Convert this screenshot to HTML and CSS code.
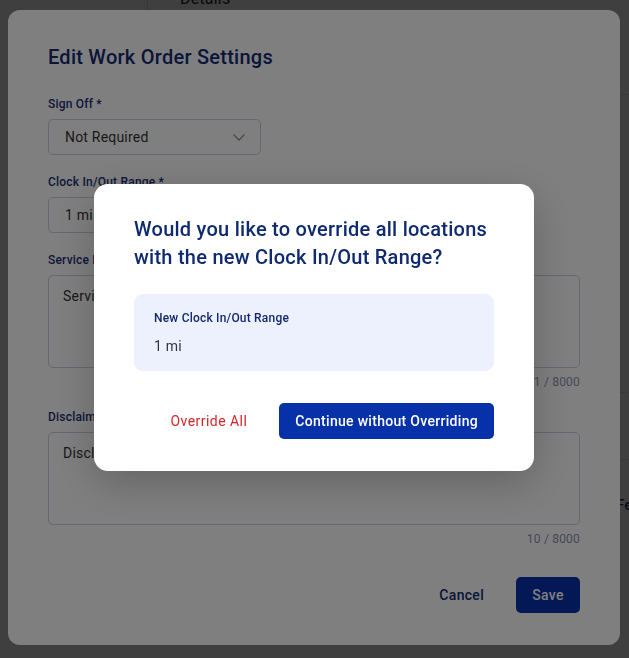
FILE: index.html
```html
<!DOCTYPE html>
<html lang="en">
<head>
    <meta charset="UTF-8">
    <meta name="viewport" content="width=device-width, initial-scale=1.0">
    <title>Edit Work Order Settings</title>
    <link rel="stylesheet" href="styles.css">
</head>
<body>
<!-- page behind the modals -->
<div class="page">
    <aside class="sidebar"><div class="sidebar-head"></div></aside>
    <main class="main">
        <div class="tabs"><span class="tab">Details</span></div>
        <div class="row row-top"></div>
        <div class="row row-mid"></div>
        <div class="row row-low"></div>
        <div class="summary">
            <span></span>
            <span class="summary-label">Fees</span>
        </div>
    </main>
</div>

<!-- settings modal -->
<div class="overlay overlay-modal">
    <div class="modal">
        <h2 class="modal-title">Edit Work Order Settings</h2>

        <div class="field">
            <label class="field-label">Sign Off *</label>
            <div class="select">
                <span>Not Required</span>
                <svg class="chevron" width="12" height="7" viewBox="0 0 12 7" fill="none">
                    <path d="M1 1l5 5 5-5" stroke="#8a8f9c" stroke-width="1.3" stroke-linecap="round" stroke-linejoin="round"/>
                </svg>
            </div>
        </div>

        <div class="field">
            <label class="field-label">Clock In/Out Range *</label>
            <div class="select"><span>1 mi</span></div>
        </div>

        <div class="field">
            <label class="field-label">Service Instructions</label>
            <div class="textarea">Service instructions</div>
            <div class="counter">21 / 8000</div>
        </div>

        <div class="field">
            <label class="field-label">Disclaimer</label>
            <div class="textarea">Disclaimer</div>
            <div class="counter">10 / 8000</div>
        </div>

        <div class="modal-actions">
            <button class="btn btn-text">Cancel</button>
            <button class="btn btn-primary">Save</button>
        </div>
    </div>
</div>

<!-- confirm dialog -->
<div class="overlay">
    <div class="dialog">
        <h2 class="dialog-title">Would you like to override all locations with the new Clock In/Out Range?</h2>
        <div class="info-box">
            <div class="info-label">New Clock In/Out Range</div>
            <div class="info-value">1 mi</div>
        </div>
        <div class="dialog-actions">
            <button class="btn btn-danger">Override All</button>
            <button class="btn btn-primary">Continue without Overriding</button>
        </div>
    </div>
</div>
</body>
</html>
```

FILE: styles.css
```css
* {
    box-sizing: border-box;
}

body {
    margin: 0;
    background: #ffffff;
    font-family: Roboto, "Noto Sans", sans-serif;
    letter-spacing: 0.2px;
    color: #333333;
    overflow: hidden;
}

/* page behind */
.page {
    display: flex;
    height: 100vh;
}

.sidebar {
    flex-shrink: 0;
    width: 148px;
}

.sidebar-head {
    height: 60px;
    border-right: 1px solid #d8dbe3;
}

.main {
    flex: 1;
    min-width: 0;
}

.tabs {
    margin-top: -12px;
    padding-left: 32px;
    height: 26px;
}

.tab {
    font-size: 16px;
    line-height: 22px;
    color: #1a1a2e;
}

.row {
    border-bottom: 1px solid #e3e5ec;
}

.row-top {
    height: 81px;
}

.row-mid {
    height: 298px;
}

.row-low {
    height: 67px;
}

.summary {
    display: grid;
    grid-template-columns: 468px 1fr;
    padding-top: 36px;
}

.summary-label {
    font-size: 15px;
    font-weight: 500;
    color: #142b72;
}

/* overlays */
.overlay {
    position: fixed;
    inset: 0;
    background: rgba(0, 0, 0, 0.5);
    display: flex;
    justify-content: center;
    align-items: center;
}

.overlay-modal {
    justify-content: flex-start;
    align-items: flex-start;
    padding: 10px 8px;
}

.modal {
    width: 612px;
    height: 635px;
    background: #ffffff;
    border-radius: 12px;
    padding: 33px 40px 32px;
    display: flex;
    flex-direction: column;
}

.modal-title {
    margin: 0 0 25px;
    font-size: 20px;
    line-height: 28px;
    font-weight: 500;
    letter-spacing: 0.25px;
    color: #142b72;
}

.field {
    margin-bottom: 19px;
}

.field-label {
    display: block;
    font-size: 12px;
    line-height: 16px;
    font-weight: 500;
    color: #1b2f75;
    margin-bottom: 7px;
}

.select {
    width: 213px;
    height: 36px;
    border: 1px solid #ccd0e0;
    border-radius: 5px;
    padding: 0 15px 0 16px;
    display: flex;
    align-items: center;
    justify-content: space-between;
    font-size: 14px;
    color: #333333;
}

.textarea {
    height: 93px;
    border: 1px solid #ccd0e0;
    border-radius: 5px;
    padding: 10px 14px;
    font-size: 14px;
    line-height: 20px;
    color: #333333;
}

.counter {
    margin-top: 6px;
    text-align: right;
    font-size: 12px;
    line-height: 16px;
    color: #8a91b4;
}

.modal-actions {
    margin-top: auto;
    display: flex;
    justify-content: flex-end;
    gap: 16px;
}

.btn {
    font-family: inherit;
    font-size: 14px;
    font-weight: 500;
    letter-spacing: 0.3px;
    height: 36px;
    border: none;
    border-radius: 5px;
    background: none;
    cursor: pointer;
    white-space: nowrap;
}

.btn-text {
    padding: 0 16px;
    color: #142b72;
}

.btn-primary {
    padding: 0 16px;
    background: #0731a8;
    color: #ffffff;
}

.modal-actions .btn-primary {
    width: 64px;
    padding: 0;
}

.btn-danger {
    padding: 0 24px;
    color: #d4252b;
    font-weight: 400;
    letter-spacing: 0.45px;
}

/* confirm dialog */
.dialog {
    width: 440px;
    margin: 0 1px 3px 0;
    background: #ffffff;
    border-radius: 14px;
    padding: 31px 40px 32px;
    box-shadow: 0 12px 40px rgba(0, 0, 0, 0.22);
}

.dialog-title {
    margin: 0 0 23px;
    font-size: 20px;
    line-height: 28px;
    font-weight: 500;
    letter-spacing: 0.25px;
    color: #102a70;
}

.info-box {
    background: #edf1fd;
    border-radius: 9px;
    padding: 16px 20px 15px;
}

.info-label {
    font-size: 12px;
    line-height: 16px;
    font-weight: 500;
    color: #13296e;
}

.info-value {
    margin-top: 10px;
    font-size: 14px;
    line-height: 20px;
    color: #333344;
}

.dialog-actions {
    margin-top: 32px;
    display: flex;
    justify-content: flex-end;
    gap: 8px;
}
```
